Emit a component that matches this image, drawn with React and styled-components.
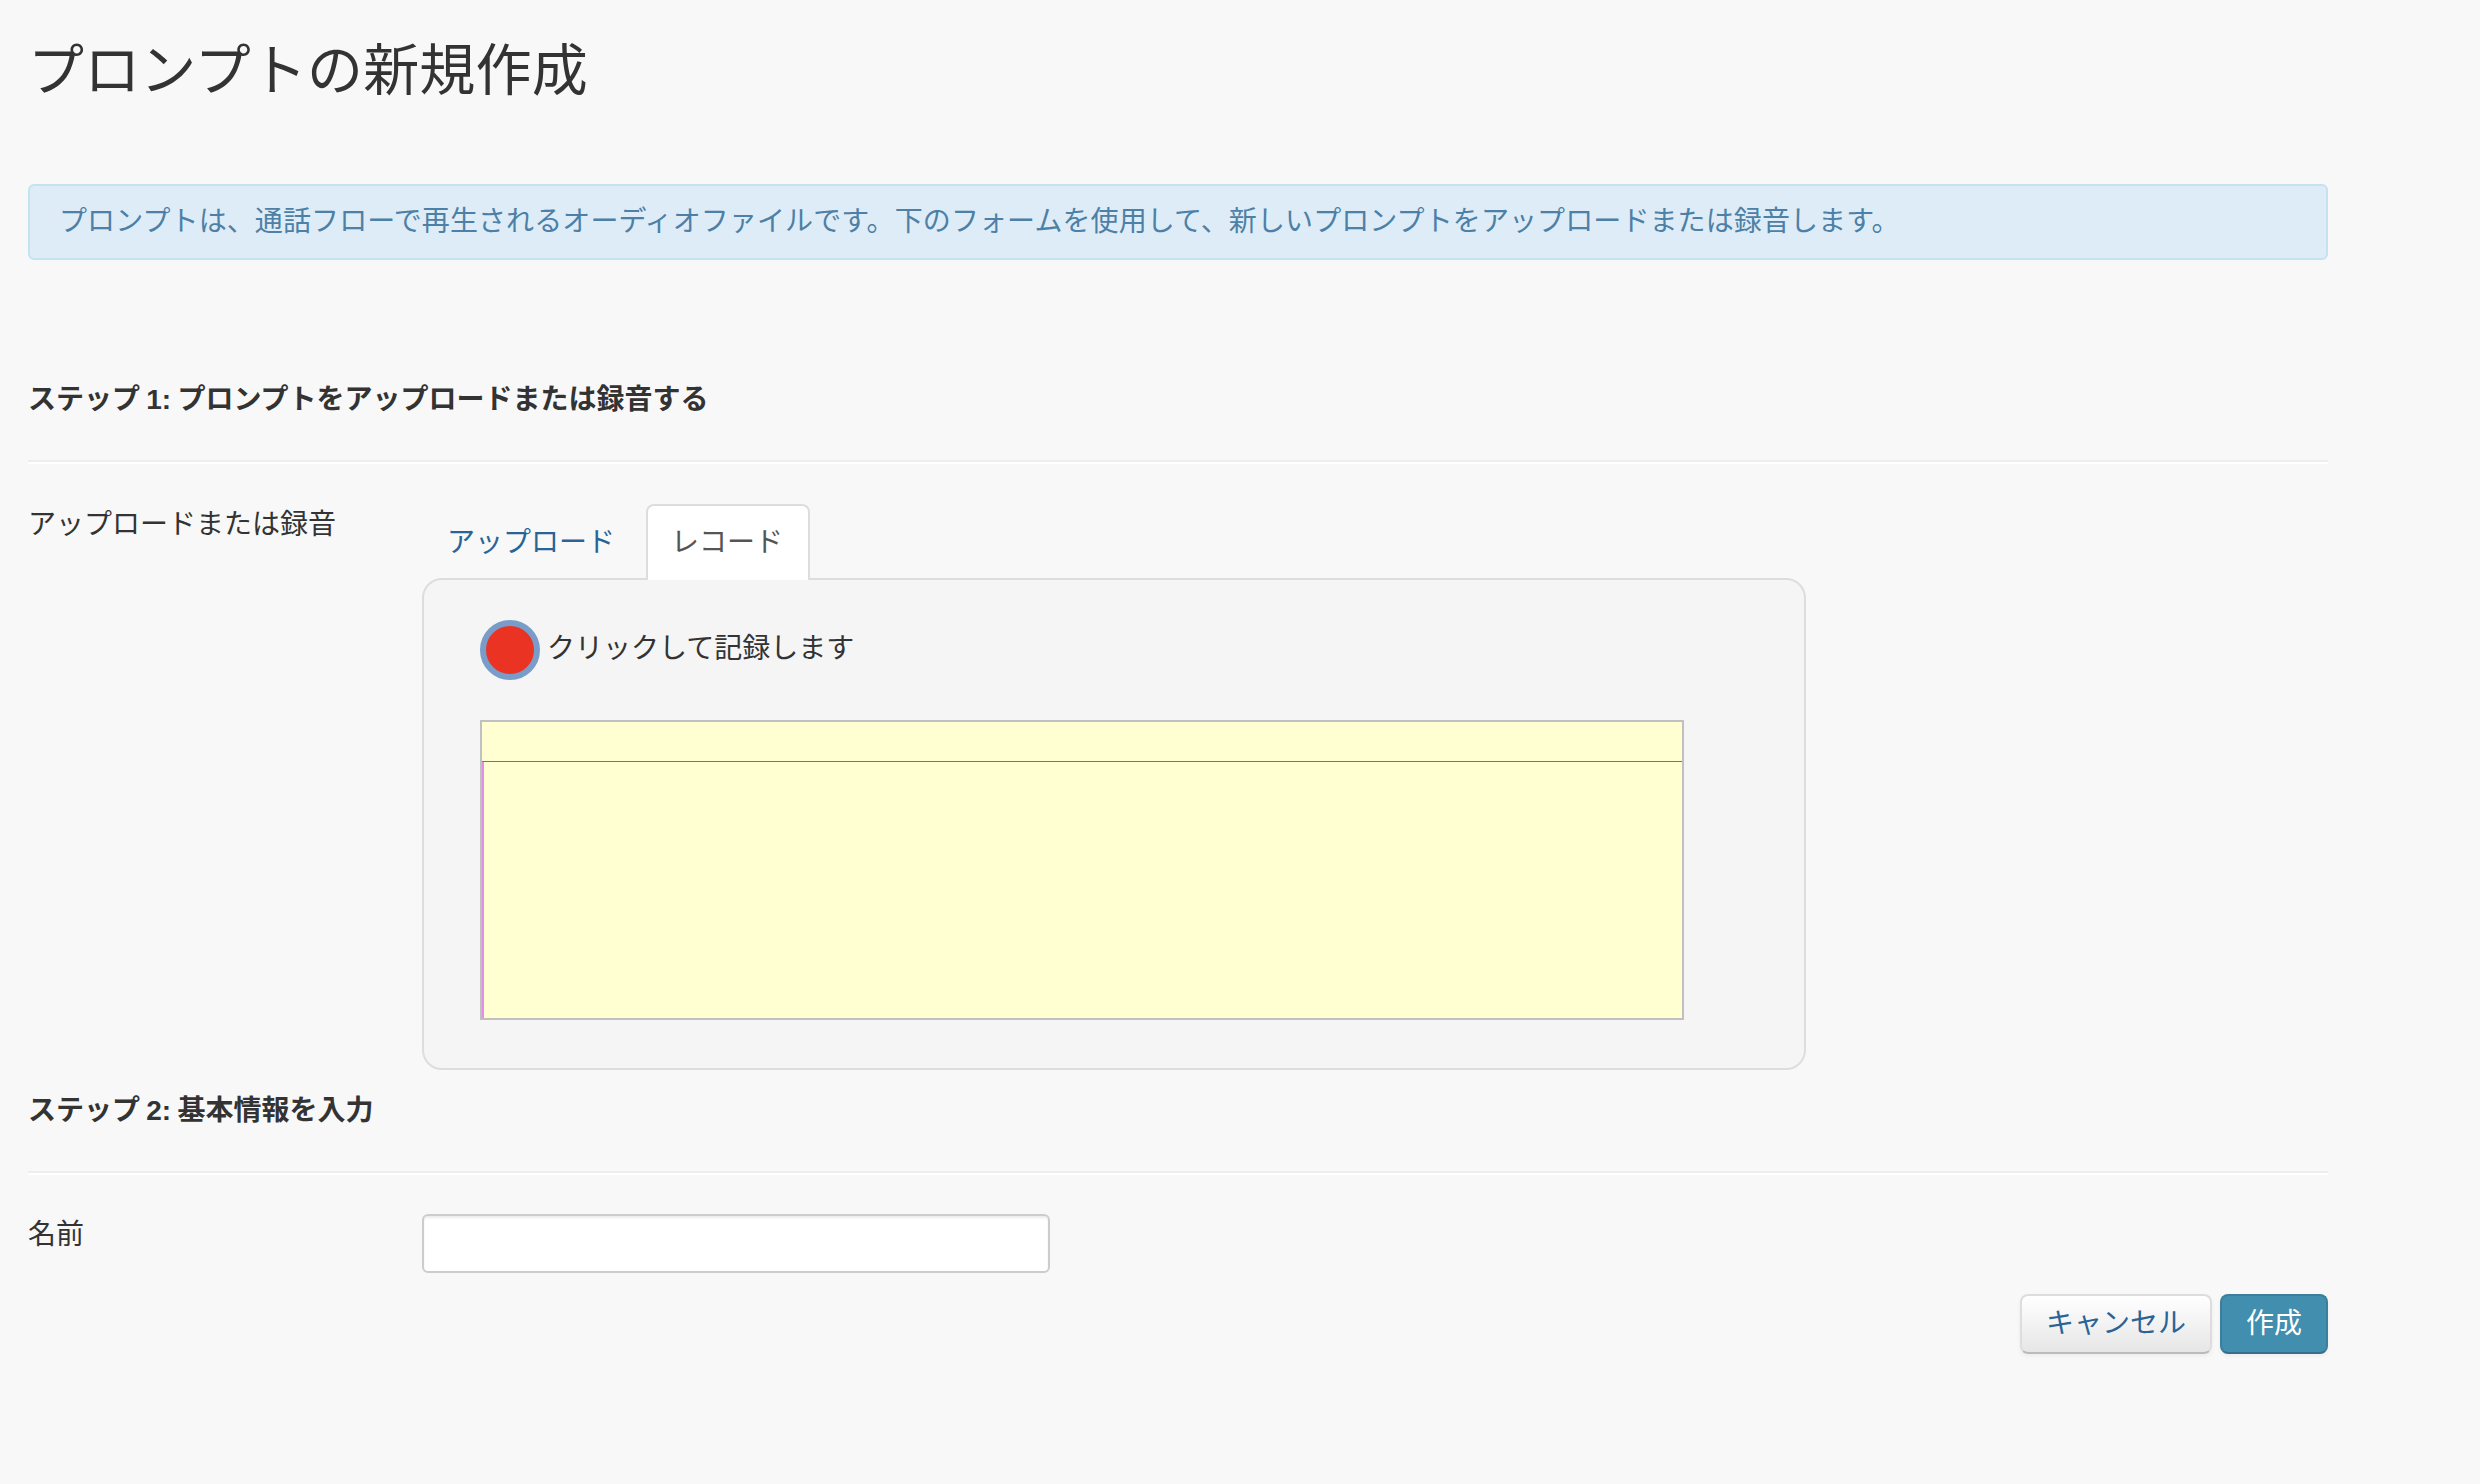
import styled, { createGlobalStyle } from "styled-components";

const GlobalStyle = createGlobalStyle`
  html, body {
    margin: 0;
    padding: 0;
    background: #f8f8f8;
  }
  body {
    font-family: "Liberation Sans", "Noto Sans CJK JP", sans-serif;
    font-size: 28px;
    line-height: 40px;
    color: #333333;
  }
  * {
    box-sizing: border-box;
  }
`;

const Page = styled.div`
  width: 2328px;
  min-height: 1484px;
  margin-left: 28px;
  padding-top: 41px;
`;

const Title = styled.h1`
  margin: 0 0 83px;
  font-size: 56px;
  line-height: 60px;
  font-weight: 400;
  letter-spacing: 0.15px;
  color: #333333;
`;

const Alert = styled.div`
  width: 2300px;
  height: 76px;
  padding: 16px 29px;
  margin-bottom: 120px;
  font-size: 28px;
  line-height: 40px;
  letter-spacing: 0.1px;
  color: #4d80a6;
  background: #deecf7;
  border: 2px solid #c3e3ef;
  border-radius: 6px;
`;

const StepHeading = styled.h4`
  margin: 0;
  width: 2300px;
  height: ${(p) => p.$height}px;
  padding-top: ${(p) => p.$pad || 0}px;
  font-size: 28px;
  line-height: 40px;
  font-weight: 700;
  word-spacing: -1.5px;
  color: #333333;
  border-bottom: 2px solid #eeeeee;
  box-shadow: 0 2px 0 #ffffff;
`;

const Row = styled.div`
  display: flex;
  margin-top: ${(p) => p.$top}px;
`;

const Label = styled.label`
  width: 394px;
  padding-top: 1px;
  flex: none;
  color: #333333;
`;

const Field = styled.div`
  flex: 1;
`;

const Tabs = styled.div`
  display: flex;
  height: 74px;
  padding-left: 2px;
  position: relative;
  z-index: 1;
`;

const Tab = styled.a`
  height: 76px;
  padding: 17px ${(p) => (p.$active ? "25px 0 23px" : "27px 0 21px")};
  margin-right: 2px;
  font-size: 28px;
  line-height: 40px;
  color: ${(p) => (p.$active ? "#555555" : "#2a6496")};
  background: ${(p) => (p.$active ? "#ffffff" : "transparent")};
  border: 2px solid ${(p) => (p.$active ? "#dddddd" : "transparent")};
  border-bottom: none;
  border-radius: 8px 8px 0 0;
`;

const Panel = styled.div`
  width: 1384px;
  height: 492px;
  padding: 40px 56px;
  background: #f5f5f5;
  border: 2px solid #dddddd;
  border-radius: 20px;
`;

const RecordRow = styled.div`
  display: flex;
  align-items: flex-start;
  gap: 7px;
  height: 100px;
  color: #333333;
`;

const RecordButton = styled.button`
  width: 60px;
  height: 60px;
  padding: 0;
  flex: none;
  background: #ea3323;
  border: 6px solid #7a9cc8;
  border-radius: 50%;
`;

const RecordLabel = styled.span`
  line-height: 58px;
`;

const Sheet = styled.div`
  width: 1204px;
  height: 300px;
  background: #ffffd2;
  border: 2px solid #c0c0c0;
`;

const SheetHeader = styled.div`
  height: 40px;
  border-bottom: 1px solid #777777;
`;

const SheetBody = styled.div`
  height: 256px;
  border-left: 2px solid #e48cec;
`;

const TextInput = styled.input`
  display: block;
  width: 628px;
  height: 59px;
  padding: 8px 12px;
  background: #ffffff;
  border: 2px solid #cccccc;
  border-radius: 6px;
  box-shadow: inset 0 2px 2px rgba(0, 0, 0, 0.075);
`;

const Actions = styled.div`
  display: flex;
  justify-content: flex-end;
  gap: 8px;
  width: 2300px;
  margin-top: 21px;
`;

const Button = styled.button`
  height: 60px;
  padding: 0 24px;
  font-family: inherit;
  font-size: 28px;
  line-height: 40px;
  color: ${(p) => (p.$primary ? "#ffffff" : "#2a6496")};
  background: ${(p) =>
    p.$primary ? "#418eae" : "linear-gradient(#ffffff, #e6e6e6)"};
  border: 2px solid ${(p) => (p.$primary ? "#3b7f9c" : "#dddddd")};
  border-bottom-color: ${(p) => (p.$primary ? "#34708a" : "#bbbbbb")};
  border-radius: 8px;
  box-shadow: 0 2px 4px rgba(0, 0, 0, 0.05);
`;

function App() {
  return (
    <Page>
      <GlobalStyle />
      <Title>プロンプトの新規作成</Title>
      <Alert>
        プロンプトは、通話フローで再生されるオーディオファイルです。下のフォームを使用して、新しいプロンプトをアップロードまたは録音します。
      </Alert>
      <StepHeading $height={82}>ステップ 1: プロンプトをアップロードまたは録音する</StepHeading>
      <Row $top={42}>
        <Label>アップロードまたは録音</Label>
        <Field>
          <Tabs>
            <Tab>アップロード</Tab>
            <Tab $active>レコード</Tab>
          </Tabs>
          <Panel>
            <RecordRow>
              <RecordButton aria-label="record" />
              <RecordLabel>クリックして記録します</RecordLabel>
            </RecordRow>
            <Sheet>
              <SheetHeader />
              <SheetBody />
            </Sheet>
          </Panel>
        </Field>
      </Row>
      <StepHeading $height={103} $pad={21}>ステップ 2: 基本情報を入力</StepHeading>
      <Row $top={41}>
        <Label>名前</Label>
        <Field>
          <TextInput type="text" />
        </Field>
      </Row>
      <Actions>
        <Button>キャンセル</Button>
        <Button $primary>作成</Button>
      </Actions>
    </Page>
  );
}

export default App;
